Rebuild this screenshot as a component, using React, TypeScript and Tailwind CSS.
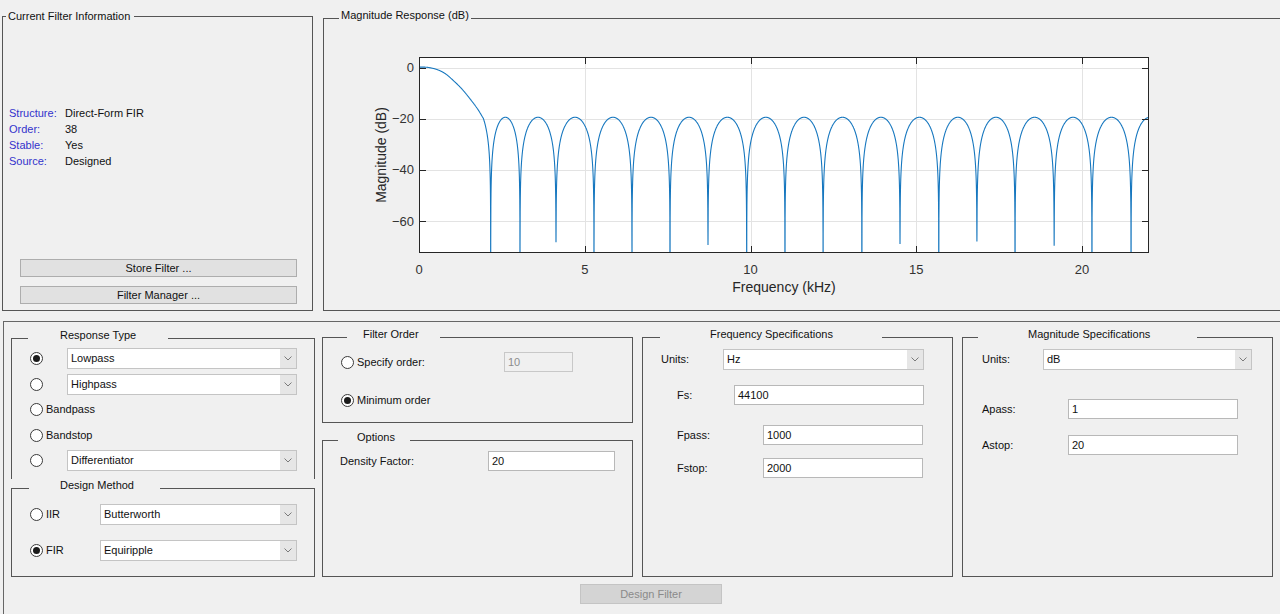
import React, { useMemo } from "react";

const NULLS = [2.163, 3.047, 4.133, 5.279, 6.425, 7.572, 8.718, 9.885, 11.04, 12.19, 13.36, 14.51, 15.68, 16.83, 17.98, 19.16, 20.3, 21.48];
const DEPTH: Record<number, number> = { 2: -68.1, 6: -69.4, 11: -69, 13: -68, 15: -69.7 };
const PB_F = [0, 0.2, 0.4, 0.6, 0.8, 1.035, 1.3, 1.54, 1.75, 1.94];
const PB_DB = [0.25, 0.2, -0.2, -1.0, -2.4, -5.0, -8.4, -12.2, -15.8, -19.8];
const DELTA = Math.pow(10, -19.4 / 20);
const A_KNEE = Math.pow(10, -19.8 / 20);

function pchip(xs: number[], ys: number[], x: number): number {
  const n = xs.length;
  const h: number[] = [];
  const d: number[] = [];
  for (let k = 0; k < n - 1; k++) {
    h.push(xs[k + 1] - xs[k]);
    d.push((ys[k + 1] - ys[k]) / h[k]);
  }
  const m: number[] = new Array(n).fill(0);
  m[0] = d[0];
  m[n - 1] = d[n - 2];
  for (let k = 1; k < n - 1; k++) {
    if (d[k - 1] * d[k] <= 0) m[k] = 0;
    else {
      const w1 = 2 * h[k] + h[k - 1];
      const w2 = h[k] + 2 * h[k - 1];
      m[k] = (w1 + w2) / (w1 / d[k - 1] + w2 / d[k]);
    }
  }
  let i = 0;
  while (i < n - 2 && x > xs[i + 1]) i++;
  const t = (x - xs[i]) / h[i];
  const t2 = t * t;
  const t3 = t2 * t;
  return (
    (2 * t3 - 3 * t2 + 1) * ys[i] +
    (t3 - 2 * t2 + t) * h[i] * m[i] +
    (-2 * t3 + 3 * t2) * ys[i + 1] +
    (t3 - t2) * h[i] * m[i + 1]
  );
}

function dbAt(f: number): number {
  if (f <= 1.94) return pchip(PB_F, PB_DB, f);
  let a = 0;
  if (f <= NULLS[0]) {
    a = (A_KNEE * (NULLS[0] - f)) / (NULLS[0] - 1.94);
  } else {
    for (let i = 0; i < NULLS.length; i++) {
      const s = NULLS[i];
      if (i + 1 < NULLS.length) {
        const b = NULLS[i + 1];
        if (f <= b) {
          a = DELTA * Math.abs(Math.sin((Math.PI * (f - s)) / (b - s)));
          break;
        }
      } else {
        a = DELTA * Math.abs(Math.sin(((Math.PI / 2) * (f - s)) / (22.05 - s)));
      }
    }
  }
  return 20 * Math.log10(Math.max(a, 1e-6));
}

const X = (f: number) => 419 + f * 33.15;
const Y = (db: number) => 67.7 - db * 2.555;

function Plot() {
  const path = useMemo(() => {
    const fs: number[] = [];
    for (let f = 0; f <= 22.05; f += 0.004) fs.push(f);
    fs.push(22.05);
    NULLS.forEach((n) => fs.push(n));
    fs.sort((a, b) => a - b);
    let s = "";
    fs.forEach((f, idx) => {
      let db = dbAt(f);
      NULLS.forEach((n, i) => {
        if (DEPTH[i] !== undefined && Math.abs(f - n) < 0.3 && db < DEPTH[i]) db = DEPTH[i];
      });
      if (db < -90) db = -90;
      s += (idx === 0 ? "M" : "L") + X(f).toFixed(2) + " " + Y(db).toFixed(2) + " ";
    });
    return s;
  }, []);

  const xt = [0, 5, 10, 15, 20];
  const yt = [0, -20, -40, -60];
  const font = "Liberation Sans, Arial, sans-serif";
  return (
    <svg width="955" height="282" viewBox="324 28 955 282" className="block">
      <defs>
        <clipPath id="axclip">
          <rect x="419" y="57" width="730" height="196" />
        </clipPath>
      </defs>
      <rect x="419" y="57" width="730" height="196" fill="#ffffff" />
      {xt.slice(1).map((t) => (
        <line key={"gx" + t} x1={Math.round(X(t)) + 0.5} x2={Math.round(X(t)) + 0.5} y1={57} y2={253} stroke="#e3e3e3" strokeWidth="1" />
      ))}
      {yt.map((t) => (
        <line key={"gy" + t} x1={419} x2={1149} y1={Math.round(Y(t)) + 0.5} y2={Math.round(Y(t)) + 0.5} stroke="#e3e3e3" strokeWidth="1" />
      ))}
      <path d={path} fill="none" stroke="#1677bf" strokeWidth="1.1" clipPath="url(#axclip)" />
      <rect x="419.5" y="57.5" width="729" height="195" fill="none" stroke="#262626" strokeWidth="1" />
      {xt.map((t) => {
        const x = Math.round(X(t)) + 0.5;
        return (
          <g key={"tx" + t}>
            <line x1={x} x2={x} y1={253} y2={246} stroke="#262626" />
            <line x1={x} x2={x} y1={57} y2={64} stroke="#262626" />
            <text x={X(t)} y={269} fontSize="13" fill="#333" textAnchor="middle" dominantBaseline="central" fontFamily={font}>
              {t}
            </text>
          </g>
        );
      })}
      {yt.map((t) => {
        const y = Math.round(Y(t)) + 0.5;
        return (
          <g key={"ty" + t}>
            <line x1={419} x2={426} y1={y} y2={y} stroke="#262626" />
            <line x1={1142} x2={1149} y1={y} y2={y} stroke="#262626" />
            <text x={414} y={Y(t)} fontSize="13" fill="#333" textAnchor="end" dominantBaseline="central" fontFamily={font}>
              {t === 0 ? "0" : "\u2212" + Math.abs(t)}
            </text>
          </g>
        );
      })}
      <text x={784} y={287} fontSize="14" fill="#262626" textAnchor="middle" dominantBaseline="central" fontFamily={font}>
        Frequency (kHz)
      </text>
      <text x={381} y={155} fontSize="14" fill="#262626" textAnchor="middle" dominantBaseline="central" fontFamily={font} transform="rotate(-90 381 155)">
        Magnitude (dB)
      </text>
    </svg>
  );
}

function Radio({ checked }: { checked?: boolean }) {
  return (
    <span className="w-[13px] h-[13px] rounded-full border border-[#3a3a3a] bg-white flex items-center justify-center shrink-0">
      {checked && <span className="w-[7px] h-[7px] rounded-full bg-[#1a1a1a]" />}
    </span>
  );
}

function Chevron() {
  return (
    <svg width="8" height="5" viewBox="0 0 8 5">
      <polyline points="0.5,0.5 4,4 7.5,0.5" fill="none" stroke="#7a7a7a" strokeWidth="1" />
    </svg>
  );
}

function Select({ value, className }: { value: string; className: string }) {
  return (
    <div className={"flex h-[21px] bg-white border border-[#c4c4c4] shrink-0 " + className}>
      <span className="flex-1 pl-[3px] leading-[19px] text-[#111]">{value}</span>
      <span className="w-[16px] bg-[#e6e6e6] flex items-center justify-center">
        <Chevron />
      </span>
    </div>
  );
}

function Input({ value, className, disabled }: { value: string; className: string; disabled?: boolean }) {
  return (
    <div
      className={
        "h-[20px] border pl-[3px] leading-[18px] shrink-0 " +
        (disabled ? "bg-[#f0f0f0] text-[#8c8c8c] border-[#c8c8c8] " : "bg-white text-[#111] border-[#b8b8b8] ") +
        className
      }
    >
      {value}
    </div>
  );
}

export default function App() {
  return (
    <div className="w-[1280px] h-[614px] overflow-hidden bg-[#f0f0f0] text-[11px] leading-[13px] text-[#111] font-['Liberation_Sans',Arial,sans-serif]">
      {/* Top row */}
      <div className="flex h-[311px]">
        <fieldset className="ml-[2px] mt-[10px] w-[311px] h-[301px] min-w-0 border border-[#555] flex flex-col shrink-0">
          <legend className="ml-[3px] pl-[2px] pr-[4px] leading-[13px]">Current Filter Information</legend>
          <div className="mt-[82px] pl-[6px] grid grid-cols-[56px_1fr] leading-[16px]">
            <span className="text-[#3333cc]">Structure:</span>
            <span>Direct-Form FIR</span>
            <span className="text-[#3333cc]">Order:</span>
            <span>38</span>
            <span className="text-[#3333cc]">Stable:</span>
            <span>Yes</span>
            <span className="text-[#3333cc]">Source:</span>
            <span>Designed</span>
          </div>
          <div className="mt-auto mb-[6px] ml-[17px] flex flex-col gap-[9px] w-[277px]">
            <button type="button" className="h-[18px] bg-[#e1e1e1] border border-[#adadad] text-[#111] leading-[16px] text-center">
              Store Filter ...
            </button>
            <button type="button" className="h-[18px] bg-[#e1e1e1] border border-[#adadad] text-[#111] leading-[16px] text-center">
              Filter Manager ...
            </button>
          </div>
        </fieldset>
        <fieldset className="ml-[10px] mt-[9px] w-[960px] h-[302px] min-w-0 border border-[#555] shrink-0">
          <legend className="ml-[15px] px-[2px] leading-[13px] pb-[6px]">Magnitude Response (dB)</legend>
          <Plot />
        </fieldset>
      </div>

      {/* Bottom section */}
      <div className="ml-[3px] mt-[10px] h-[300px] border-t border-l border-[#666] flex flex-col">
        <div className="flex items-start pt-[6px] pl-[7px]">
          {/* Column 1 */}
          <div className="w-[304px] mt-[1px] flex flex-col shrink-0">
            <fieldset className="h-[150px] min-w-0 border-t border-l border-r border-[#555]">
              <legend className="ml-[16px] w-[140px] pl-[32px] leading-[13px] pb-[6px]">Response Type</legend>
              <div className="flex flex-col pl-[18px]">
                <div className="flex items-center h-[21px]">
                  <Radio checked />
                  <Select value="Lowpass" className="ml-[24px] w-[230px]" />
                </div>
                <div className="flex items-center h-[21px] mt-[5px]">
                  <Radio />
                  <Select value="Highpass" className="ml-[24px] w-[230px]" />
                </div>
                <div className="flex items-center h-[21px] mt-[4px]">
                  <Radio />
                  <span className="ml-[3px]">Bandpass</span>
                </div>
                <div className="flex items-center h-[21px] mt-[5px]">
                  <Radio />
                  <span className="ml-[3px]">Bandstop</span>
                </div>
                <div className="flex items-center h-[21px] mt-[4px]">
                  <Radio />
                  <Select value="Differentiator" className="ml-[24px] w-[230px]" />
                </div>
              </div>
            </fieldset>
            <fieldset className="h-[98px] min-w-0 border border-[#555]">
              <legend className="ml-[17px] w-[131px] pl-[31px] leading-[13px] pb-[6px]">Design Method</legend>
              <div className="flex flex-col pl-[18px]">
                <div className="flex items-center h-[21px] mt-[6px]">
                  <div className="w-[70px] flex items-center">
                    <Radio />
                    <span className="ml-[3px]">IIR</span>
                  </div>
                  <Select value="Butterworth" className="w-[197px]" />
                </div>
                <div className="flex items-center h-[21px] mt-[15px]">
                  <div className="w-[70px] flex items-center">
                    <Radio checked />
                    <span className="ml-[3px]">FIR</span>
                  </div>
                  <Select value="Equiripple" className="w-[197px]" />
                </div>
              </div>
            </fieldset>
          </div>

          {/* Column 2 */}
          <div className="w-[311px] ml-[7px] flex flex-col shrink-0">
            <fieldset className="h-[95px] min-w-0 border border-[#555]">
              <legend className="ml-[24px] w-[93px] pl-[16px] leading-[13px] pb-[6px]">Filter Order</legend>
              <div className="flex flex-col pl-[18px]">
                <div className="flex items-center h-[20px] mt-[5px]">
                  <div className="w-[163px] flex items-center">
                    <Radio />
                    <span className="ml-[3px]">Specify order:</span>
                  </div>
                  <Input value="10" disabled className="w-[69px]" />
                </div>
                <div className="flex items-center h-[20px] mt-[18px]">
                  <Radio checked />
                  <span className="ml-[3px]">Minimum order</span>
                </div>
              </div>
            </fieldset>
            <fieldset className="h-[146px] mt-[8px] min-w-0 border border-[#555]">
              <legend className="ml-[15px] w-[72px] pl-[19px] leading-[13px] pb-[6px]">Options</legend>
              <div className="flex items-center h-[20px] mt-[1px] pl-[17px]">
                <span className="w-[148px]">Density Factor:</span>
                <Input value="20" className="w-[127px]" />
              </div>
            </fieldset>
          </div>

          {/* Column 3 */}
          <fieldset className="w-[311px] h-[249px] ml-[9px] min-w-0 border border-[#555] shrink-0">
            <legend className="ml-[17px] w-[222px] pl-[50px] leading-[13px] pb-[6px]">Frequency Specifications</legend>
            <div className="flex items-center h-[21px] mt-[2px] pl-[18px]">
              <span className="w-[62px]">Units:</span>
              <Select value="Hz" className="w-[201px]" />
            </div>
            <div className="flex items-center h-[20px] mt-[15px] pl-[34px]">
              <span className="w-[57px]">Fs:</span>
              <Input value="44100" className="w-[190px]" />
            </div>
            <div className="flex items-center h-[20px] mt-[20px] pl-[34px]">
              <span className="w-[86px]">Fpass:</span>
              <Input value="1000" className="w-[160px]" />
            </div>
            <div className="flex items-center h-[20px] mt-[13px] pl-[34px]">
              <span className="w-[86px]">Fstop:</span>
              <Input value="2000" className="w-[160px]" />
            </div>
          </fieldset>

          {/* Column 4 */}
          <fieldset className="w-[311px] h-[249px] ml-[9px] min-w-0 border border-[#555] shrink-0">
            <legend className="ml-[15px] w-[219px] pl-[50px] leading-[13px] pb-[6px]">Magnitude Specifications</legend>
            <div className="flex items-center h-[21px] mt-[2px] pl-[19px]">
              <span className="w-[61px]">Units:</span>
              <Select value="dB" className="w-[209px]" />
            </div>
            <div className="flex items-center h-[20px] mt-[29px] pl-[19px]">
              <span className="w-[86px]">Apass:</span>
              <Input value="1" className="w-[170px]" />
            </div>
            <div className="flex items-center h-[20px] mt-[16px] pl-[19px]">
              <span className="w-[86px]">Astop:</span>
              <Input value="20" className="w-[170px]" />
            </div>
          </fieldset>
        </div>
        <div className="mt-[7px] ml-[576px]">
          <button type="button" className="w-[142px] h-[20px] bg-[#d4d4d4] border border-[#c4c4c4] text-[#8a8a8a] leading-[18px] text-center">
            Design Filter
          </button>
        </div>
      </div>
    </div>
  );
}
